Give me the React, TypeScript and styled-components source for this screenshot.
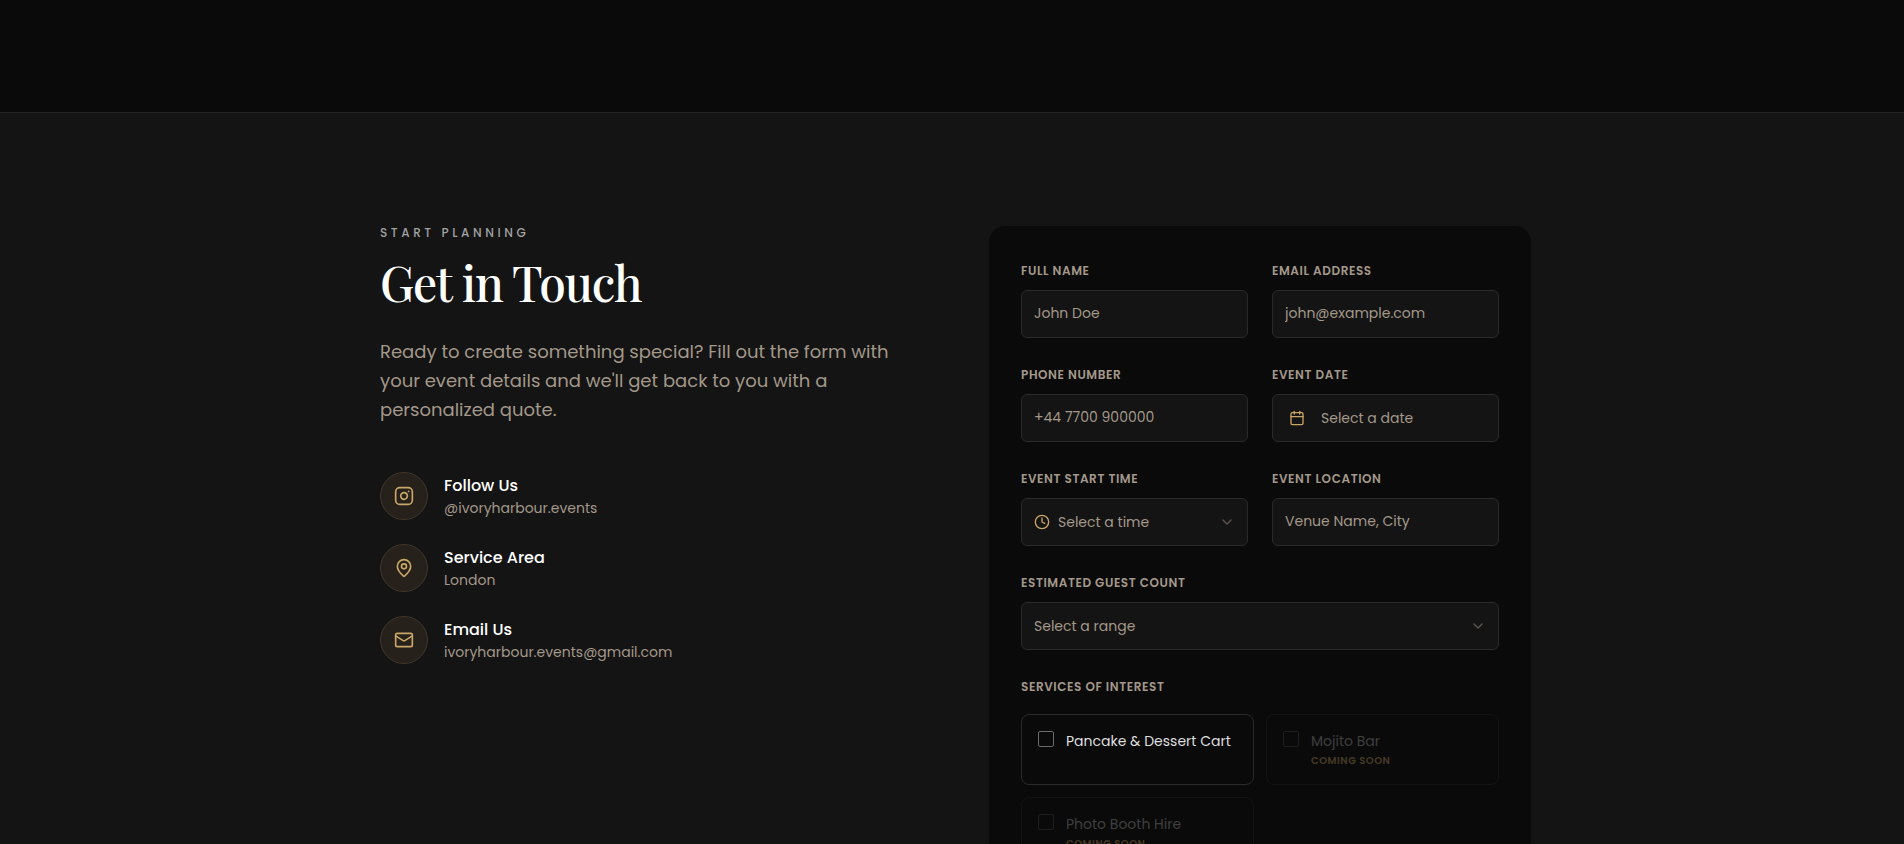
import React from 'react';
import styled, { createGlobalStyle, css } from 'styled-components';
import { Calendar, ChevronDown, Clock, Instagram, Mail, MapPin } from 'lucide-react';

const sans = `Poppins, Inter, "Open Sans", sans-serif`;
const gold = '#c9a567';
const muted = '#a3988a';

const GlobalStyle = createGlobalStyle`
  *, *::before, *::after { box-sizing: border-box; }
  body {
    margin: 0;
    background: #141414;
    color: #ffffff;
    font-family: ${sans};
    font-size: 16px;
    line-height: 24px;
  }
  h2, h3, p, fieldset { margin: 0; }
`;

const Page = styled.main`
  height: 100vh;
  overflow: hidden;
`;

const Spacer = styled.div`
  height: 112px;
  background: #0a0a0a;
`;

const Contact = styled.section`
  border-top: 1px solid #242424;
  background: #141414;
  padding: 113px 24px 112px;
`;

const Columns = styled.div`
  max-width: 1158px;
  margin: 0 auto;
  padding-left: 7px;
  display: grid;
  grid-template-columns: 1fr 1fr;
  gap: 67px;
  align-items: start;
`;

const Eyebrow = styled.p`
  font-size: 12px;
  line-height: 14px;
  font-weight: 500;
  letter-spacing: 0.3em;
  text-transform: uppercase;
  color: #a1a1a1;
`;

const Title = styled.h2`
  margin-top: 16px;
  font-family: "Playfair Display", "Liberation Serif", serif;
  font-size: 48px;
  line-height: 53px;
  font-weight: 500;
  letter-spacing: -0.025em;
`;

const Lead = styled.p`
  margin-top: 28px;
  max-width: 520px;
  font-size: 18px;
  line-height: 29px;
  color: ${muted};
`;

const ContactList = styled.div`
  margin-top: 48px;
  display: grid;
  gap: 24px;
`;

const ContactItem = styled.div`
  display: flex;
  align-items: center;
  gap: 16px;
`;

const IconCircle = styled.div`
  width: 48px;
  height: 48px;
  flex: none;
  display: grid;
  place-items: center;
  border: 1px solid #40372a;
  border-radius: 50%;
  background: #26221b;
  color: ${gold};
`;

const ContactName = styled.h3`
  font-size: 16px;
  line-height: 24px;
  font-weight: 500;
`;

const ContactValue = styled.p`
  font-size: 14px;
  line-height: 20px;
  color: ${muted};
`;

const Form = styled.form`
  padding: 32px;
  border-radius: 16px;
  background: #0a0a0a;
  display: grid;
  grid-template-columns: 1fr 1fr;
  gap: 24px;
`;

const Field = styled.div<{ $wide?: boolean }>`
  ${(p) => p.$wide && css`grid-column: 1 / -1;`}
`;

const labelText = css`
  display: block;
  padding: 4px 0 0;
  margin-bottom: 10px;
  font-size: 12px;
  line-height: 18px;
  font-weight: 600;
  letter-spacing: 0.05em;
  text-transform: uppercase;
  color: ${muted};
`;

const Label = styled.label`
  ${labelText}
`;

const control = css`
  width: 100%;
  height: 48px;
  border: 1px solid #2a2a2a;
  border-radius: 6px;
  background: #141414;
  color: ${muted};
  font-family: ${sans};
  font-size: 14px;
  line-height: 20px;
  outline: none;
`;

const Input = styled.input`
  ${control}
  padding: 0 12px 2px;
  &::placeholder { color: ${muted}; opacity: 1; }
`;

const DateButton = styled.button`
  ${control}
  display: flex;
  align-items: center;
  gap: 16px;
  padding: 0 16px;
  text-align: left;
  svg { color: ${gold}; }
`;

const SelectBox = styled.div`
  ${control}
  display: flex;
  align-items: center;
  gap: 8px;
  padding: 0 12px;
`;

const Select = styled.select`
  appearance: none;
  flex: 1;
  min-width: 0;
  height: 100%;
  padding: 0;
  border: 0;
  background: transparent;
  color: inherit;
  font: inherit;
  outline: none;
`;

const Services = styled.fieldset`
  grid-column: 1 / -1;
  min-width: 0;
  padding: 0;
  border: 0;
`;

const Legend = styled.legend`
  ${labelText}
  margin-bottom: 18px;
`;

const ServiceGrid = styled.div`
  display: grid;
  grid-template-columns: 1fr 1fr;
  gap: 12px;
`;

const Check = styled.input`
  appearance: none;
  flex: none;
  width: 16px;
  height: 16px;
  margin: 0;
  border: 1px solid #6b6b6b;
  border-radius: 2px;
`;

const ServiceName = styled.span`
  display: block;
  font-size: 14px;
  line-height: 20px;
  color: #dedede;
`;

const Service = styled.label<{ $soon?: boolean }>`
  display: flex;
  gap: 12px;
  min-height: 71px;
  padding: 16px;
  border: 1px solid #2a2a2a;
  border-radius: 8px;
  ${(p) =>
    p.$soon &&
    css`
      opacity: 0.3;
      ${ServiceName} { color: #b3b3b3; }
      ${Check} { border-color: #4d4d4d; }
    `}
`;

const Soon = styled.span`
  display: block;
  margin-top: 2px;
  font-size: 10px;
  line-height: 15px;
  font-weight: 600;
  letter-spacing: 0.05em;
  text-transform: uppercase;
  color: ${gold};
`;

const contacts = [
  { icon: Instagram, name: 'Follow Us', value: '@ivoryharbour.events' },
  { icon: MapPin, name: 'Service Area', value: 'London' },
  { icon: Mail, name: 'Email Us', value: 'ivoryharbour.events@gmail.com' },
];

const services = [
  { name: 'Pancake & Dessert Cart', soon: false },
  { name: 'Mojito Bar', soon: true },
  { name: 'Photo Booth Hire', soon: true },
];

export default function App() {
  return (
    <Page>
      <GlobalStyle />
      <Spacer />
      <Contact>
        <Columns>
          <div>
            <Eyebrow>Start Planning</Eyebrow>
            <Title>Get in Touch</Title>
            <Lead>
              Ready to create something special? Fill out the form with your event details and we'll get back to you with a
              personalized quote.
            </Lead>
            <ContactList>
              {contacts.map(({ icon: Icon, name, value }) => (
                <ContactItem key={name}>
                  <IconCircle>
                    <Icon size={20} />
                  </IconCircle>
                  <div>
                    <ContactName>{name}</ContactName>
                    <ContactValue>{value}</ContactValue>
                  </div>
                </ContactItem>
              ))}
            </ContactList>
          </div>
          <Form>
            <Field>
              <Label htmlFor="name">Full Name</Label>
              <Input id="name" placeholder="John Doe" />
            </Field>
            <Field>
              <Label htmlFor="email">Email Address</Label>
              <Input id="email" type="email" placeholder="john@example.com" />
            </Field>
            <Field>
              <Label htmlFor="phone">Phone Number</Label>
              <Input id="phone" type="tel" placeholder="+44 7700 900000" />
            </Field>
            <Field>
              <Label htmlFor="date">Event Date</Label>
              <DateButton id="date" type="button">
                <Calendar size={16} />
                Select a date
              </DateButton>
            </Field>
            <Field>
              <Label htmlFor="time">Event Start Time</Label>
              <SelectBox>
                <Clock size={16} color={gold} />
                <Select id="time">
                  <option>Select a time</option>
                </Select>
                <ChevronDown size={16} opacity={0.5} />
              </SelectBox>
            </Field>
            <Field>
              <Label htmlFor="location">Event Location</Label>
              <Input id="location" placeholder="Venue Name, City" />
            </Field>
            <Field $wide>
              <Label htmlFor="guests">Estimated Guest Count</Label>
              <SelectBox>
                <Select id="guests">
                  <option>Select a range</option>
                </Select>
                <ChevronDown size={16} opacity={0.5} />
              </SelectBox>
            </Field>
            <Services>
              <Legend>Services of Interest</Legend>
              <ServiceGrid>
                {services.map(({ name, soon }) => (
                  <Service key={name} $soon={soon}>
                    <Check type="checkbox" disabled={soon} />
                    <span>
                      <ServiceName>{name}</ServiceName>
                      {soon && <Soon>Coming Soon</Soon>}
                    </span>
                  </Service>
                ))}
              </ServiceGrid>
            </Services>
          </Form>
        </Columns>
      </Contact>
    </Page>
  );
}
